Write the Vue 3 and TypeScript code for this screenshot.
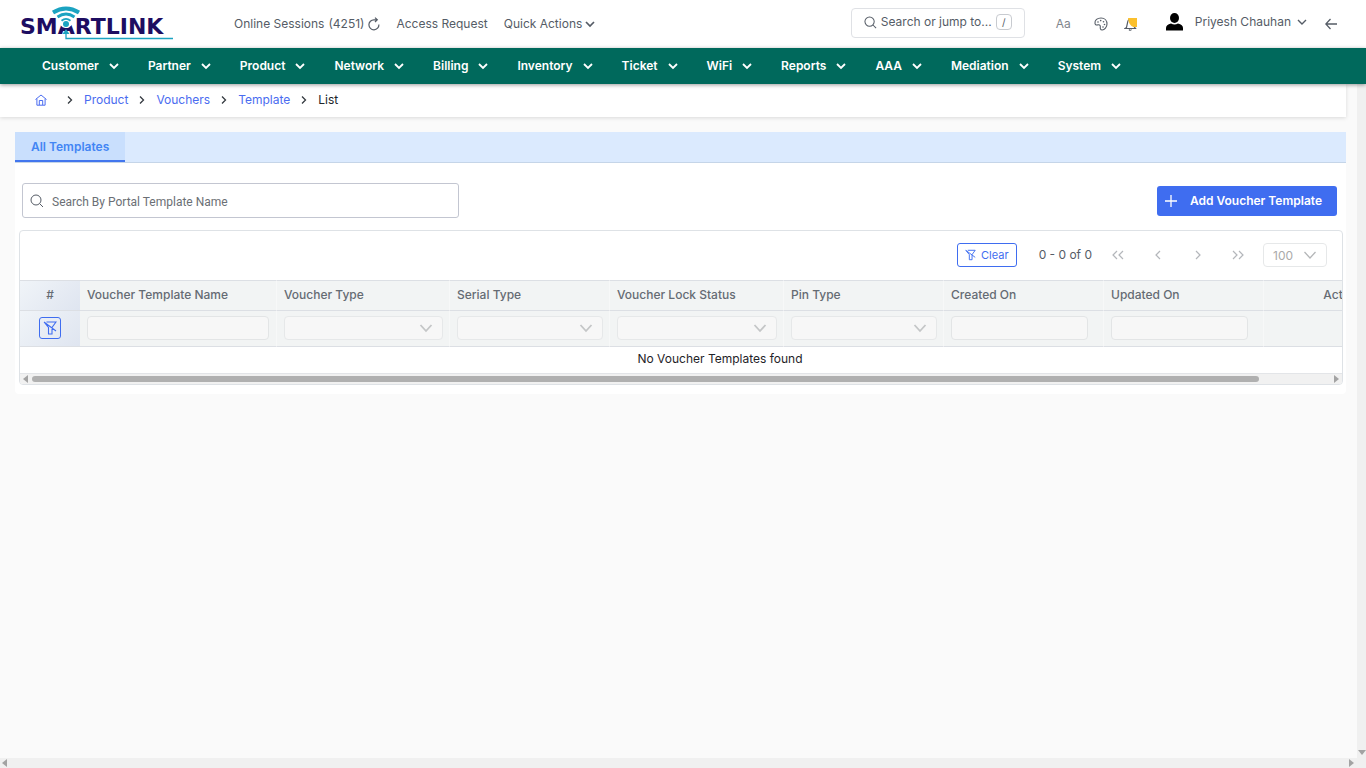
<script setup lang="ts">
import { ref } from 'vue'

interface Column {
  label: string
  width: number
  filter: 'text' | 'date' | 'select' | 'none'
}

const menu: string[] = ['Customer', 'Partner', 'Product', 'Network', 'Billing', 'Inventory', 'Ticket', 'WiFi', 'Reports', 'AAA', 'Mediation', 'System']
const crumbs: string[] = ['Product', 'Vouchers', 'Template']
const columns: Column[] = [
  { label: 'Voucher Template Name', width: 197, filter: 'text' },
  { label: 'Voucher Type', width: 173, filter: 'select' },
  { label: 'Serial Type', width: 160, filter: 'select' },
  { label: 'Voucher Lock Status', width: 174, filter: 'select' },
  { label: 'Pin Type', width: 160, filter: 'select' },
  { label: 'Created On', width: 160, filter: 'date' },
  { label: 'Updated On', width: 160, filter: 'date' },
  { label: 'Actions', width: 156, filter: 'none' },
]
const search = ref('')
</script>

<template>
  <div class="app">
    <header class="top">
      <a class="logo" href="#" aria-label="Smartlink">
        <svg width="162" height="36" viewBox="0 0 162 36">
          <text class="wordmark" x="7" y="28">SMARTLINK</text>
          <path d="M45 17Q53 5 61 17L56 21.500H50Z" fill="#fff" />
          <g fill="none" stroke="#1ba3c1">
            <path d="M40 6.500Q53 -1.500 66 6.500" stroke-width="4" />
            <path d="M44.500 11Q53 5 61.500 11" stroke-width="2.800" />
            <path d="M48.500 14.800Q53 11 57.500 14.800" stroke-width="1.800" />
            <path d="M53 27V32.500H160" stroke-width="1.300" />
          </g>
          <circle cx="53" cy="18" r="3" fill="#1ba3c1" />
          <path d="M53 23L56.500 28H49.500Z" fill="#1ba3c1" />
        </svg>
      </a>
      <div class="quick">
        <a href="#" class="sessions">Online Sessions <span>(4251)</span>
          <svg width="12" height="14" viewBox="0 0 12 14" fill="none" stroke="currentColor" stroke-width="1.200"><path d="M10.900 7.500A5 5 0 1 1 6 2.800H9M7 .600L9.300 2.800L7 5" /></svg>
        </a>
        <a href="#" class="access">Access Request</a>
        <button type="button" class="actions">Quick Actions
          <svg width="10" height="10" viewBox="0 0 10 10" fill="none" stroke="currentColor" stroke-width="1.700"><path d="M1 3L5 7L9 3" /></svg>
        </button>
      </div>
      <button type="button" class="jump">
        <svg width="13" height="13" viewBox="0 0 14 14" fill="none" stroke="currentColor" stroke-width="1.100"><circle cx="6" cy="6" r="5" /><path d="M9.700 9.700L13 13" /></svg>
        <span>Search or jump to...</span><kbd>/</kbd>
      </button>
      <div class="tools">
        <button type="button" class="font-size">Aa</button>
        <button type="button" aria-label="Theme" class="theme">
          <svg width="14" height="14" viewBox="0 0 14 14" fill="none" stroke="currentColor" stroke-width="1.100"><path d="M1 6.500C.500 3 3.500 1 7 1C11 1 13 4 13 7C13 10 10.500 13 8.200 13C6 13 6.200 11 6.300 9.300C6.300 7.800 5 7.500 3.500 7.900C2 8.200 1.200 7.900 1 6.500Z" /><g fill="currentColor" stroke="none"><circle cx="4" cy="5" r=".800" /><circle cx="6.700" cy="3.600" r=".800" /><circle cx="9.500" cy="4.800" r=".800" /><circle cx="10.500" cy="7.500" r=".800" /><circle cx="9" cy="10" r=".800" /></g></svg>
        </button>
        <button type="button" aria-label="Notifications" class="bell">
          <svg width="14" height="14" viewBox="0 0 14 14"><path d="M2.500 10.500L1 11.500H11.500L10 9.500V6C10 3 8.500 2 6.500 2C4.500 2 3.700 4 3.500 6ZM5 12.500Q6.300 14 7.500 12.500" fill="none" stroke="#555c66" stroke-width="1.200" /><path d="M4 1H13V10H9.500Q5 9 4 1Z" fill="#fbc02d" /></svg>
        </button>
      </div>
      <button type="button" class="user">
        <svg width="17" height="18" viewBox="0 0 17 18"><ellipse cx="8.500" cy="5" rx="4.500" ry="5" /><path d="M0 17.500V15Q0 11.500 5 10.500Q8.500 12.500 12 10.500Q17 11.500 17 15V17.500Z" /></svg>
        <span>Priyesh Chauhan</span>
        <svg width="10" height="10" viewBox="0 0 10 10" fill="none" stroke="currentColor" stroke-width="1.400"><path d="M1 3L5 7L9 3" /></svg>
      </button>
      <button type="button" class="back" aria-label="Back">
        <svg width="12" height="12" viewBox="0 0 12 12" fill="none" stroke="currentColor" stroke-width="1.300"><path d="M12 6H1M5.500 1L.800 6L5.500 11" /></svg>
      </button>
    </header>

    <nav class="menu" aria-label="Main">
      <button v-for="item in menu" :key="item" type="button">{{ item }}
        <svg width="10" height="10" viewBox="0 0 10 10" fill="none" stroke="currentColor" stroke-width="1.800"><path d="M1 3L5 7L9 3" /></svg>
      </button>
    </nav>

    <div class="viewport">
      <main>
        <nav class="crumbs" aria-label="Breadcrumb">
          <a href="#" class="home" aria-label="Home">
            <svg width="12" height="12" viewBox="0 0 12 12" fill="none" stroke="currentColor" stroke-width="1"><path d="M.500 5.500L6 1L11.500 5.500M1.900 4.800V11.200H10.100V4.800M4.300 11V6.500H7.700V11" /></svg>
          </a>
          <template v-for="crumb in crumbs" :key="crumb">
            <svg class="sep" width="6" height="10" viewBox="0 0 6 10"><path d="M1 1.500L4.500 5L1 8.500" /></svg>
            <a href="#">{{ crumb }}</a>
          </template>
          <svg class="sep" width="6" height="10" viewBox="0 0 6 10"><path d="M1 1.500L4.500 5L1 8.500" /></svg>
          <span>List</span>
        </nav>

        <section class="panel">
          <div class="tabs" role="tablist">
            <button type="button" role="tab" aria-selected="true">All Templates</button>
          </div>
          <div class="bar">
            <label class="search">
              <svg width="14" height="14" viewBox="0 0 14 14" fill="none" stroke="currentColor" stroke-width="1"><circle cx="6" cy="6" r="5" /><path d="M9.700 9.700L13 13" /></svg>
              <input v-model="search" type="text" placeholder="Search By Portal Template Name" aria-label="Search By Portal Template Name">
            </label>
            <button type="button" class="add">
              <svg width="12" height="12" viewBox="0 0 12 12" fill="none" stroke="currentColor" stroke-width="1.300"><path d="M6 0V12M0 6H12" /></svg>
              Add Voucher Template
            </button>
          </div>

          <div class="card">
            <div class="pager">
              <button type="button" class="clear">
                <svg width="11" height="12" viewBox="0 0 14 14" fill="none" stroke="currentColor" stroke-width="1.200"><path d="M3.500 1H13L9 6.500V13H5.500V6.500L1 1M1 1L13 10" /></svg>
                Clear
              </button>
              <span class="count">0 - 0 of 0</span>
              <button type="button" class="page" disabled aria-label="First page"><svg width="12" height="10" viewBox="0 0 12 10"><path d="M5 1L1 5L5 9M11 1L7 5L11 9" /></svg></button>
              <button type="button" class="page" disabled aria-label="Previous page"><svg width="12" height="10" viewBox="0 0 12 10"><path d="M8 1L4 5L8 9" /></svg></button>
              <button type="button" class="page" disabled aria-label="Next page"><svg width="12" height="10" viewBox="0 0 12 10"><path d="M4 1L8 5L4 9" /></svg></button>
              <button type="button" class="page" disabled aria-label="Last page"><svg width="12" height="10" viewBox="0 0 12 10"><path d="M1 1L5 5L1 9M7 1L11 5L7 9" /></svg></button>
              <span class="dropdown size">
                <select disabled aria-label="Rows per page"><option>100</option></select>
                <svg width="14" height="10" viewBox="0 0 14 10"><path d="M1.500 2L7 8L12.500 2" /></svg>
              </span>
            </div>
            <div class="scroller">
              <table>
                <colgroup><col class="index"><col v-for="c in columns" :key="c.label" :style="{ width: c.width + 'px' }"></colgroup>
                <thead>
                  <tr>
                    <th class="first">#</th>
                    <th v-for="c in columns" :key="c.label" :class="c.filter">{{ c.label }}</th>
                  </tr>
                  <tr class="filters">
                    <th class="first">
                      <button type="button" class="reset" aria-label="Reset filters">
                        <svg width="14" height="14" viewBox="0 0 14 14" fill="none" stroke="currentColor" stroke-width="1.100"><path d="M3.500 1H13L9 6.500V13H5.500V6.500L1 1M1 1L13 10" /></svg>
                      </button>
                    </th>
                    <td v-for="c in columns" :key="c.label" :class="c.filter">
                      <input v-if="c.filter === 'text' || c.filter === 'date'" type="text" disabled :aria-label="c.label">
                      <span v-else-if="c.filter === 'select'" class="dropdown">
                        <select disabled :aria-label="c.label"></select>
                        <svg width="14" height="10" viewBox="0 0 14 10"><path d="M1.500 2L7 8L12.500 2" /></svg>
                      </span>
                    </td>
                  </tr>
                </thead>
                <tbody><tr><td class="empty" :colspan="columns.length + 1">No Voucher Templates found</td></tr></tbody>
              </table>
            </div>
            <div class="hbar"><i class="left"></i><div class="rail"><div class="thumb"></div></div><i class="right"></i></div>
          </div>
        </section>
      </main>
      <div class="vtrack"><i class="down"></i></div>
      <div class="htrack"><i class="left"></i><i class="right"></i></div>
    </div>
  </div>
</template>

<style>
body { background: #fafafa; }
</style>

<style scoped>
* { box-sizing: border-box; }
.app { display: flex; flex-direction: column; height: 100vh; overflow: hidden; font: 12px/20px Inter, "Liberation Sans", sans-serif; color: #555c66; }
button { font: inherit; color: inherit; background: none; border: 0; padding: 0; display: flex; align-items: center; }
a { color: inherit; text-decoration: none; }
svg { display: block; flex: none; }
input, select { font: inherit; }

.top { display: flex; align-items: center; height: 48px; flex: none; background: #fff; padding: 0 29px 0 13px; }
.logo { width: 221px; }
.wordmark { font: bold 22px "DejaVu Sans", sans-serif; fill: #1d0d61; }
.quick { display: flex; align-items: center; flex: 1; gap: 16px; }
.sessions { display: flex; align-items: center; gap: 4px; }
.actions { gap: 3px; }
.jump { width: 174px; height: 30px; border: 1px solid #dfe1e5; border-radius: 4px; padding: 0 12px 2px; gap: 4px; margin: 0 31px 2px 0; white-space: nowrap; }
kbd { width: 19px; height: 16px; border: 1px solid #c8cbd0; border-radius: 4px; font: 10px/14px Inter, sans-serif; text-align: center; }
.tools { display: flex; align-items: center; gap: 16px; margin-right: 28px; }
.font-size { width: 22px; color: #80858c; }
.user { gap: 6px; margin-bottom: 4px; }
.user span { margin-left: 6px; }
.user svg:first-child { fill: #000; }
.back { margin-left: 18px; }

.menu { display: flex; align-items: center; gap: 29px; height: 36px; flex: none; padding: 0 42px; background: #00695c; color: #fff; box-shadow: 0 1px 4px #0006; z-index: 1; }
.menu button { gap: 10px; font-weight: 600; }

.viewport { flex: 1; min-height: 0; display: grid; grid-template: minmax(0, 1fr) 10px / minmax(0, 1fr) 9px; }
main { padding-right: 11px; background: #fafafa; overflow: hidden; }
.crumbs { display: flex; align-items: center; gap: 11px; height: 33px; padding: 0 35px 2px; background: #fff; box-shadow: 0 1px 4px #0002; color: #212529; }
.crumbs a { color: #4a6cf0; }
.home { margin-right: 9px; }
.sep { fill: none; stroke: #343a40; stroke-width: 1.300; }

.panel { margin: 15px 0 0 15px; background: #fff; padding-bottom: 9px; border-radius: 0 0 4px 4px; }
.tabs { display: flex; height: 31px; background: #dbeafe; border-bottom: 1px solid #c5d5e8; }
.tabs button { height: 30px; padding: 2px 16px 0; background: #c9dffd; border-bottom: 2px solid #4276ee; color: #4285f4; font-weight: 600; }
.bar { display: flex; align-items: center; justify-content: space-between; padding: 20px 9px 12px 7px; }
.search { display: flex; align-items: center; gap: 6px; width: 437px; height: 35px; border: 1px solid #c3c6d1; border-radius: 3px; padding-left: 7px; }
.search input { flex: 1; border: 0; outline: 0; padding: 2px 2px 0; font: 12px/20px Roboto, sans-serif; background: none; }
.search input::placeholder { color: #6b6f75; opacity: 1; }
.add { height: 30px; padding: 0 15px 0 8px; gap: 13px; border-radius: 3px; background: #3f6df0; color: #fff; font-weight: 600; }

.card { margin: 0 3px 0 4px; border: 1px solid #dee2e6; border-radius: 4px; overflow: hidden; }
.pager { display: flex; align-items: center; justify-content: flex-end; height: 49px; padding: 0 15px 1px 0; }
.clear { height: 24px; padding: 0 7px; gap: 5px; border: 1px solid #3f6df0; border-radius: 3px; color: #3f6df0; font-size: 11px; }
.count { margin: 0 6px 0 22px; }
.page { width: 40px; height: 24px; justify-content: center; }
.page svg { fill: none; stroke: #b4b7bb; stroke-width: 1.200; }
.dropdown { display: grid; align-items: center; }
.dropdown > * { grid-area: 1 / 1; }
.dropdown select { appearance: none; width: 100%; height: 24px; border: 1px solid #e6e8e9; border-radius: 4px; background: #f7f7f7; opacity: 1; }
.dropdown svg { justify-self: end; margin-right: 10px; fill: none; stroke: #c4c6c7; stroke-width: 1.800; pointer-events: none; }
.size { width: 64px; margin-left: 5px; }
.dropdown.size select { background: #fff; color: #aaa; padding: 0 9px; font: 12px Inter, sans-serif; }
.dropdown.size svg { stroke: #b4b6b8; stroke-width: 1.300; }

.scroller { overflow: hidden; }
table { width: 1400px; table-layout: fixed; border-collapse: separate; border-spacing: 0; }
.index { width: 60px; }
thead th, thead td { height: 30px; padding: 0 7px 2px; border-top: 1px solid #dcdfe4; border-right: 1px solid #f7f8f8; background: #f2f4f4; font-weight: 500; text-align: left; color: #656b73; }
thead .none { padding-left: 14px; text-align: center; }
thead .date { padding-right: 15px; }
thead .select { padding-right: 6px; }
thead .first { text-align: center; border-right: 0; background: linear-gradient(135deg, #f0f4f8, #dfe5f0); }
.filters > * { height: 37px; border-bottom: 1px solid #dcdfe4; }
.filters input { display: block; width: 100%; height: 24px; border: 1px solid #e3e5e6; border-radius: 4px; background: #f7f7f7; }
.reset { width: 22px; height: 22px; justify-content: center; margin: 0 auto; border: 1px solid #3f6df0; border-radius: 3px; color: #3f6df0; }
.empty { height: 26px; padding: 0 0 2px; text-align: center; color: #1f2328; }

.hbar { display: flex; align-items: center; justify-content: space-between; height: 11px; padding: 0 3px; border-top: 1px solid #e3e5e8; background: #f1f1f1; }
.rail { flex: 1; padding: 0 4px; }
.thumb { width: 94.500%; height: 6px; border-radius: 3px; background: #b0b0b0; }
.left, .right, .down { display: block; width: 0; height: 0; border: 4px solid transparent; }
.left { border-left: 0; border-right: 5px solid #a3a3a3; }
.right { border-right: 0; border-left: 5px solid #a3a3a3; }
.down { border-bottom: 0; border-top: 5px solid #a3a3a3; }
.vtrack { display: flex; align-items: flex-end; justify-content: center; padding-bottom: 3px; background: #f0f0f0; }
.htrack { grid-column: 1 / 3; display: flex; align-items: center; justify-content: space-between; padding: 0 12px 0 2px; background: #f0f0f0; }
</style>
